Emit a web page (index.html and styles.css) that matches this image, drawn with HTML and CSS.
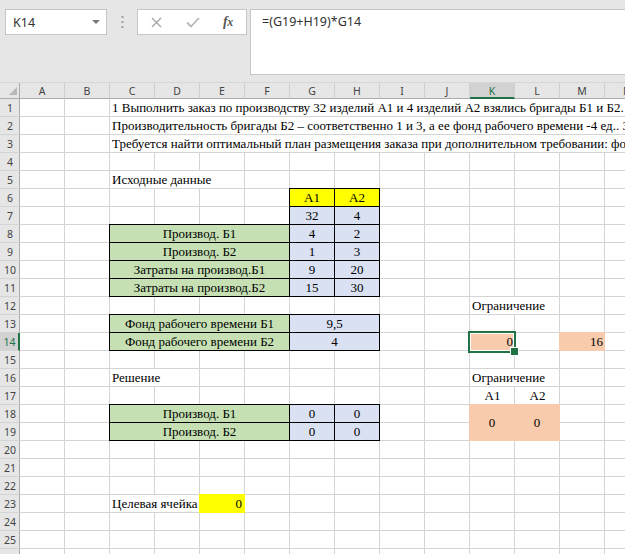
FILE: index.html
```html
<!DOCTYPE html>
<html lang="ru">
<head>
<meta charset="utf-8">
<title>Excel</title>
<link rel="stylesheet" href="styles.css">
</head>
<body>
<div class="toolbar">
  <div class="namebox"><span>K14</span>
    <svg class="dd" width="8" height="4" viewBox="0 0 8 4"><polygon points="0,0 8,0 4,4" fill="#7a7a7a"/></svg>
  </div>
  <div class="grip">
    <svg width="3" height="12" viewBox="0 0 3 12"><rect x="0.5" y="0" width="2" height="2" fill="#a0a0a0"/><rect x="0.5" y="5" width="2" height="2" fill="#a0a0a0"/><rect x="0.5" y="10" width="2" height="2" fill="#a0a0a0"/></svg>
  </div>
  <div class="fxbox">
    <svg class="ic-x" width="11" height="11" viewBox="0 0 11 11"><path d="M1 1 L10 10 M10 1 L1 10" stroke="#a6a6a6" stroke-width="1.4" fill="none"/></svg>
    <svg class="ic-ok" width="14" height="11" viewBox="0 0 14 11"><path d="M1 5.5 L5 9.5 L13 1" stroke="#b8b8b8" stroke-width="1.8" fill="none"/></svg>
    <span class="fx">f<span class="fx-x">x</span></span>
  </div>
  <div class="formula">=(G19+H19)*G14</div>
</div>

<div class="colheads">
  <div class="corner"><svg width="8" height="8" viewBox="0 0 8 8"><polygon points="8,0 8,8 0,8" fill="#b8b8b8"/></svg></div>
  <div class="ch">A</div><div class="ch">B</div><div class="ch">C</div><div class="ch">D</div>
  <div class="ch">E</div><div class="ch">F</div><div class="ch">G</div><div class="ch">H</div>
  <div class="ch">I</div><div class="ch">J</div><div class="ch ch-sel">K</div><div class="ch">L</div>
  <div class="ch">M</div><div class="ch">N</div>
</div>

<div class="main">
  <div class="rowheads">
    <div class="rh">1</div><div class="rh">2</div><div class="rh">3</div><div class="rh">4</div>
    <div class="rh">5</div><div class="rh">6</div><div class="rh">7</div><div class="rh">8</div>
    <div class="rh">9</div><div class="rh">10</div><div class="rh">11</div><div class="rh">12</div>
    <div class="rh">13</div><div class="rh rh-sel">14</div><div class="rh">15</div><div class="rh">16</div>
    <div class="rh">17</div><div class="rh">18</div><div class="rh">19</div><div class="rh">20</div>
    <div class="rh">21</div><div class="rh">22</div><div class="rh">23</div><div class="rh">24</div>
    <div class="rh">25</div><div class="rh">26</div>
  </div>

  <div class="sheet">
    <div class="cell ovf intro1">1 Выполнить заказ по производству 32 изделий А1 и 4 изделий А2 взялись бригады Б1 и Б2. Производительность бригады Б1 по изготовлению изделий А1 и А2 составляет соответственно 4 и 2 изделия в единицу времени</div>
    <div class="cell ovf intro2">Производительность бригады Б2 – соответственно 1 и 3, а ее фонд рабочего времени -4 ед.. Затраты, связанные с производством единицы изделия</div>
    <div class="cell ovf intro3">Требуется найти оптимальный план размещения заказа при дополнительном требовании: фонд рабочего времени бригады Б1 должен быть полностью использован</div>

    <div class="cell ovf src-title">Исходные данные</div>

    <div class="cell bx yellow g6">А1</div>
    <div class="cell bx yellow h6">А2</div>
    <div class="cell bx blue g7">32</div>
    <div class="cell bx blue h7">4</div>

    <div class="cell bx green lbl r8">Производ. Б1</div>
    <div class="cell bx blue g8">4</div>
    <div class="cell bx blue h8">2</div>
    <div class="cell bx green lbl r9">Производ. Б2</div>
    <div class="cell bx blue g9">1</div>
    <div class="cell bx blue h9">3</div>
    <div class="cell bx green lbl r10">Затраты на производ.Б1</div>
    <div class="cell bx blue g10">9</div>
    <div class="cell bx blue h10">20</div>
    <div class="cell bx green lbl r11">Затраты на производ.Б2</div>
    <div class="cell bx blue g11">15</div>
    <div class="cell bx blue h11">30</div>

    <div class="cell ovf lim1">Ограничение</div>

    <div class="cell bx green lbl r13">Фонд рабочего времени Б1</div>
    <div class="cell bx blue gh13">9,5</div>
    <div class="cell bx green lbl r14">Фонд рабочего времени Б2</div>
    <div class="cell bx blue gh14">4</div>
    <div class="cell fill peach num k14 selected">0</div>
    <div class="cell fill peach num m14">16</div>

    <div class="cell ovf sol-title">Решение</div>
    <div class="cell ovf lim2">Ограничение</div>
    <div class="cell ctr k17">А1</div>
    <div class="cell ctr l17">А2</div>

    <div class="cell bx green lbl r18">Производ. Б1</div>
    <div class="cell bx blue g18">0</div>
    <div class="cell bx blue h18">0</div>
    <div class="cell bx green lbl r19">Производ. Б2</div>
    <div class="cell bx blue g19">0</div>
    <div class="cell bx blue h19">0</div>
    <div class="cell fill peach mid k18">0</div>
    <div class="cell fill peach mid l18">0</div>

    <div class="cell ovf goal">Целевая ячейка</div>
    <div class="cell fill yellow num e23">0</div>
  </div>
</div>
</body>
</html>
```

FILE: styles.css
```css
* { box-sizing: border-box; }

html, body {
  margin: 0;
  padding: 0;
}

body {
  width: 625px;
  height: 554px;
  overflow: hidden;
  background: #ffffff;
  font-family: "Liberation Serif", "Times New Roman", serif;
}

/* ---------- formula bar ---------- */
.toolbar {
  display: flex;
  align-items: flex-start;
  height: 83px;
  padding-top: 9px;
  background: #e6e6e6;
  border-bottom: 1px solid #d6d6d6;
}

.namebox {
  margin-left: 5px;
  width: 102px;
  height: 26px;
  background: #ffffff;
  border: 1px solid #c6c6c6;
  display: flex;
  align-items: center;
  justify-content: space-between;
  padding: 0 6px 0 7px;
  font: 12.5px "Noto Sans", "DejaVu Sans", sans-serif;
  color: #333333;
}

.grip {
  width: 30px;
  height: 26px;
  display: flex;
  align-items: center;
  justify-content: center;
}

.fxbox {
  width: 110px;
  height: 26px;
  background: #ffffff;
  border: 1px solid #c6c6c6;
  display: flex;
  align-items: center;
}

.ic-x { margin-left: 13px; }
.ic-ok { margin-left: 24px; }

.fx {
  margin-left: 23px;
  font: italic bold 14px "Liberation Serif", serif;
  color: #5a5a5a;
  letter-spacing: -0.5px;
}
.fx-x { font-size: 12px; }

.formula {
  margin-left: 3px;
  flex: 1;
  height: 66px;
  background: #ffffff;
  border: 1px solid #c6c6c6;
  border-right: none;
  padding: 3px 0 0 11px;
  font: 12.5px/18px "Noto Sans", "DejaVu Sans", sans-serif;
  color: #333333;
  white-space: nowrap;
}

/* ---------- headers ---------- */
.colheads {
  display: flex;
  height: 16px;
  background: #e6e6e6;
}

.corner {
  flex: none;
  width: 20px;
  height: 16px;
  border-right: 1px solid #ababab;
  border-bottom: 1px solid #ababab;
  display: flex;
  align-items: flex-end;
  justify-content: flex-end;
  padding: 0 2px 3px 0;
}

.ch {
  flex: none;
  width: 45px;
  height: 16px;
  border-right: 1px solid #cfcfcf;
  border-bottom: 1px solid #ababab;
  text-align: center;
  font: 10.5px/16px "Noto Sans", "DejaVu Sans", sans-serif;
  color: #444444;
}

.ch-sel {
  background: #d2d2d2;
  color: #217346;
  border-bottom: 2px solid #217346;
}

.main {
  display: flex;
}

.rowheads {
  flex: none;
  width: 20px;
  display: flex;
  flex-direction: column;
  background: #e6e6e6;
}

.rh {
  height: 18px;
  border-right: 1px solid #ababab;
  border-bottom: 1px solid #d4d4d4;
  text-align: center;
  font: 10.5px/18px "Noto Sans", "DejaVu Sans", sans-serif;
  color: #444444;
  padding-left: 1px;
}

.rh-sel {
  background: #d2d2d2;
  color: #217346;
  border-right: 2px solid #217346;
}

/* ---------- sheet grid ---------- */
.sheet {
  flex: none;
  display: grid;
  grid-template-columns: repeat(14, 45px);
  grid-template-rows: repeat(26, 18px);
  background-image:
    linear-gradient(to right, transparent 44px, #d4d4d4 44px),
    linear-gradient(to bottom, transparent 17px, #d4d4d4 17px);
  background-size: 45px 18px;
}

.cell {
  font-family: "Liberation Serif", "Times New Roman", serif;
  font-size: 13px;
  line-height: 18px;
  white-space: nowrap;
  color: #000000;
  padding: 0 2px;
}

.ovf {
  background: #ffffff;
  margin: 0 1px 1px 0;
  overflow: visible;
}

.bx {
  margin: -1px 0 0 -1px;
  border: 1px solid #000000;
  text-align: center;
  line-height: 17px;
}

.fill {
  margin: -1px 0 0 -1px;
  padding-top: 1px;
}

.num { text-align: right; padding-right: 2px; }
.ctr { text-align: center; }
.mid {
  display: flex;
  align-items: center;
  justify-content: center;
}

.yellow { background: #ffff00; }
.blue { background: #d9e1f2; }
.green { background: #c6e0b4; }
.peach { background: #f8cbad; }

.lbl { grid-column: 3 / 7; }

/* placement */
.intro1 { grid-row: 1; grid-column: 3 / 15; }
.intro2 { grid-row: 2; grid-column: 3 / 15; }
.intro3 { grid-row: 3; grid-column: 3 / 15; }
.src-title { grid-row: 5; grid-column: 3 / 6; }

.g6 { grid-row: 6; grid-column: 7; }
.h6 { grid-row: 6; grid-column: 8; }
.g7 { grid-row: 7; grid-column: 7; }
.h7 { grid-row: 7; grid-column: 8; }

.r8 { grid-row: 8; }
.g8 { grid-row: 8; grid-column: 7; }
.h8 { grid-row: 8; grid-column: 8; }
.r9 { grid-row: 9; }
.g9 { grid-row: 9; grid-column: 7; }
.h9 { grid-row: 9; grid-column: 8; }
.r10 { grid-row: 10; }
.g10 { grid-row: 10; grid-column: 7; }
.h10 { grid-row: 10; grid-column: 8; }
.r11 { grid-row: 11; }
.g11 { grid-row: 11; grid-column: 7; }
.h11 { grid-row: 11; grid-column: 8; }

.lim1 { grid-row: 12; grid-column: 11 / 13; }

.r13 { grid-row: 13; }
.gh13 { grid-row: 13; grid-column: 7 / 9; }
.r14 { grid-row: 14; }
.gh14 { grid-row: 14; grid-column: 7 / 9; }
.k14 { grid-row: 14; grid-column: 11; }
.m14 { grid-row: 14; grid-column: 13; }

.sol-title { grid-row: 16; grid-column: 3 / 5; }
.lim2 { grid-row: 16; grid-column: 11 / 13; }
.k17 { grid-row: 17; grid-column: 11; }
.l17 { grid-row: 17; grid-column: 12; }

.r18 { grid-row: 18; }
.g18 { grid-row: 18; grid-column: 7; }
.h18 { grid-row: 18; grid-column: 8; }
.r19 { grid-row: 19; }
.g19 { grid-row: 19; grid-column: 7; }
.h19 { grid-row: 19; grid-column: 8; }
.k18 { grid-row: 18 / 20; grid-column: 11; }
.l18 { grid-row: 18 / 20; grid-column: 12; }

.goal { grid-row: 23; grid-column: 3 / 5; }
.e23 { grid-row: 23; grid-column: 5; padding-right: 3px; }

/* active cell selection overlay */
.selected { position: relative; }
.selected::after {
  content: "";
  position: absolute;
  inset: -1px -1px -2px -1px;
  border: 2px solid #217346;
  box-shadow: inset 0 0 0 1px #ffffff;
}
.selected::before {
  content: "";
  position: absolute;
  right: -4px;
  bottom: -5px;
  width: 7px;
  height: 7px;
  background: #217346;
  border: 1px solid #ffffff;
  z-index: 2;
}
```
